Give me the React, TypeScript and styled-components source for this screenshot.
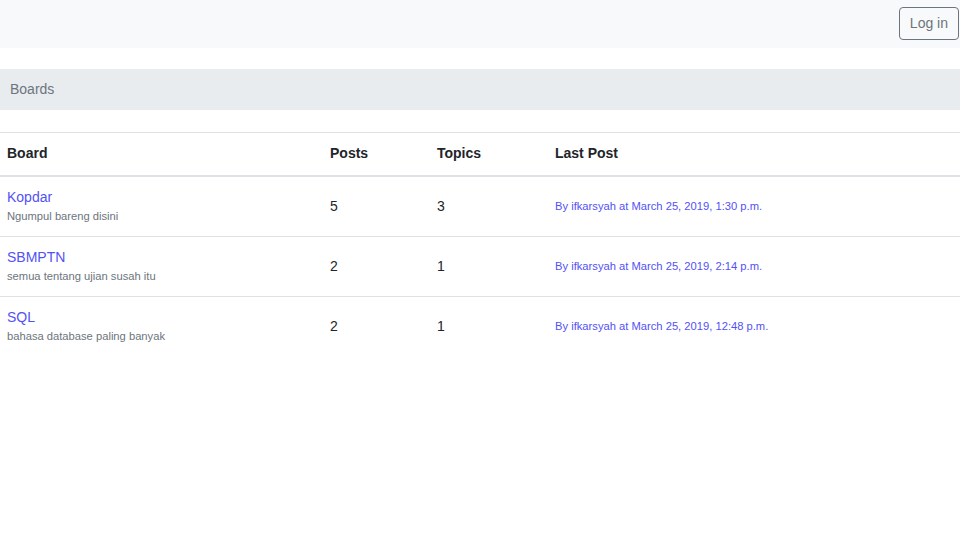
import React from "react";
import styled, { createGlobalStyle } from "styled-components";

const Global = createGlobalStyle`
  html, body { margin: 0; padding: 0; background: #fff; }
  body { font-family: "Liberation Sans", Arial, sans-serif; color: #212529; font-size: 14px; line-height: 1.5; }
  * { box-sizing: border-box; }
`;

const NavBar = styled.nav`
  height: 48px;
  background: #f8f9fa;
  display: flex;
  align-items: center;
  justify-content: flex-end;
  padding: 0 1px 1px 0;
`;

const LoginButton = styled.button`
  font-family: inherit;
  font-size: 14px;
  line-height: 21px;
  padding: 5px 10px;
  color: #6c757d;
  background: transparent;
  border: 1px solid #6c757d;
  border-radius: 4px;
  cursor: pointer;
`;

const Breadcrumb = styled.div`
  margin-top: 21px;
  background: #e9ecef;
  padding: 10px 10px;
  font-size: 14px;
  line-height: 21px;
  color: #6c757d;
`;

const Table = styled.table`
  margin-top: 22px;
  width: 100%;
  border-collapse: collapse;
`;

const HeadCell = styled.th`
  text-align: left;
  font-weight: bold;
  font-size: 14px;
  line-height: 21px;
  padding: 10px 7px 11px;
  border-top: 1px solid #dee2e6;
  border-bottom: 2px solid #dee2e6;
`;

const Cell = styled.td<{ $first?: boolean }>`
  padding: 10px 7px 11px;
  vertical-align: middle;
  font-size: 14px;
  line-height: 21px;
  border-top: ${(p) => (p.$first ? "none" : "1px solid #dee2e6")};
`;

const BoardLink = styled.a`
  display: block;
  color: #5252f5;
  text-decoration: none;
  font-size: 14px;
  line-height: 20px;
`;

const Desc = styled.div`
  font-size: 11.2px;
  line-height: 18px;
  color: #6c757d;
`;

const LastPost = styled.a`
  color: #5252f5;
  text-decoration: none;
  font-size: 11.2px;
`;

const boards = [
  { name: "Kopdar", desc: "Ngumpul bareng disini", posts: 5, topics: 3, last: "By ifkarsyah at March 25, 2019, 1:30 p.m." },
  { name: "SBMPTN", desc: "semua tentang ujian susah itu", posts: 2, topics: 1, last: "By ifkarsyah at March 25, 2019, 2:14 p.m." },
  { name: "SQL", desc: "bahasa database paling banyak", posts: 2, topics: 1, last: "By ifkarsyah at March 25, 2019, 12:48 p.m." },
];

export default function App() {
  return (
    <>
      <Global />
      <NavBar>
        <LoginButton>Log in</LoginButton>
      </NavBar>
      <Breadcrumb>Boards</Breadcrumb>
      <Table>
        <colgroup>
          <col style={{ width: 323 }} />
          <col style={{ width: 107 }} />
          <col style={{ width: 118 }} />
          <col />
        </colgroup>
        <thead>
          <tr>
            <HeadCell>Board</HeadCell>
            <HeadCell>Posts</HeadCell>
            <HeadCell>Topics</HeadCell>
            <HeadCell>Last Post</HeadCell>
          </tr>
        </thead>
        <tbody>
          {boards.map((b, i) => (
            <tr key={b.name}>
              <Cell $first={i === 0}>
                <BoardLink href="#">{b.name}</BoardLink>
                <Desc>{b.desc}</Desc>
              </Cell>
              <Cell $first={i === 0}>{b.posts}</Cell>
              <Cell $first={i === 0}>{b.topics}</Cell>
              <Cell $first={i === 0}>
                <LastPost href="#">{b.last}</LastPost>
              </Cell>
            </tr>
          ))}
        </tbody>
      </Table>
    </>
  );
}
